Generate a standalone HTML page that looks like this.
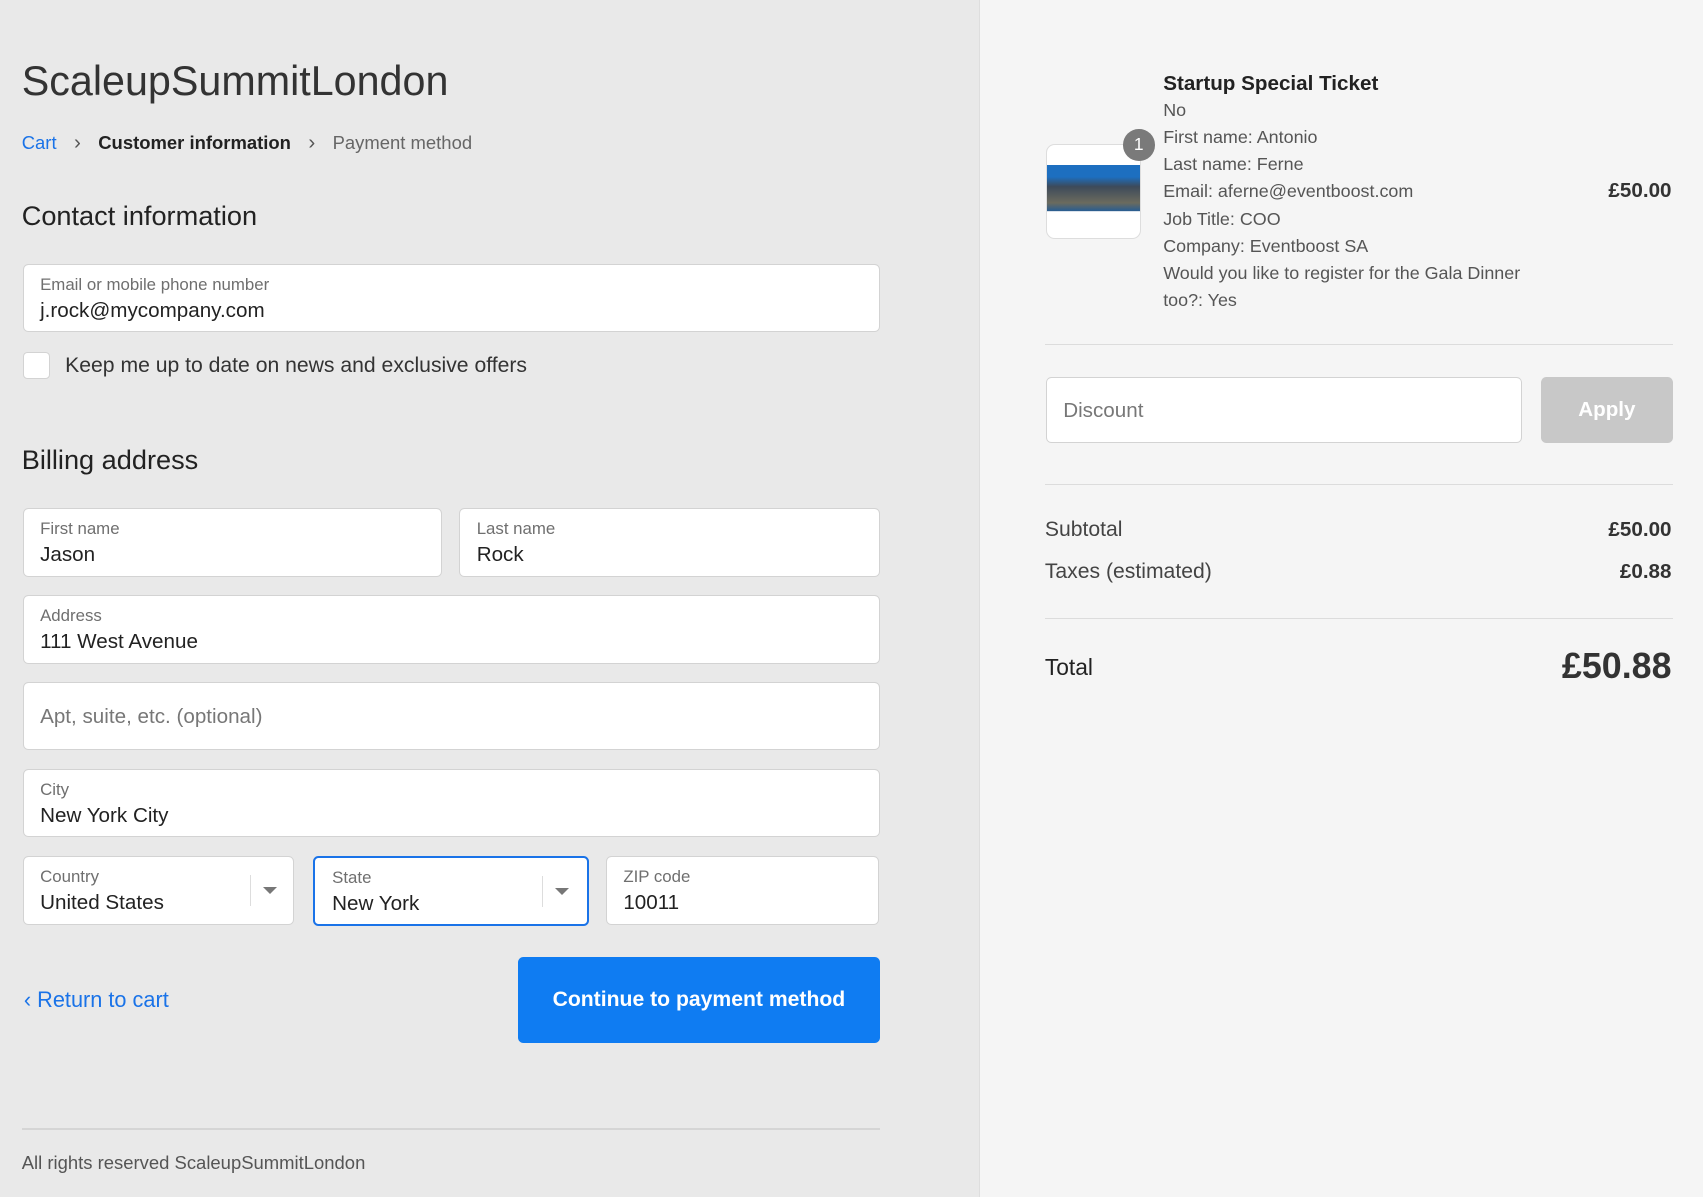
<!DOCTYPE html>
<html><head><meta charset="utf-8"><style>
*{box-sizing:border-box;margin:0;padding:0}
html,body{width:1703px;height:1197px;overflow:hidden;background:#f5f5f5}
#w{zoom:1.08610;width:1568px;height:1102px;position:relative;font-family:"Liberation Sans",Arial,sans-serif;color:#333}
.a{position:absolute;white-space:nowrap}
#left{position:absolute;left:0;top:0;width:902px;height:1102px;background:#e9e9e9;border-right:1px solid #dedede}
.in{position:absolute;background:#fff;border:1px solid #d3d3d3;border-radius:5px}
.lb{position:absolute;left:15px;top:9px;font-size:15.5px;color:#6f6f6f}
.vl{position:absolute;left:15px;top:31px;font-size:19px;color:#222}
.ph{position:absolute;left:15px;top:20px;font-size:19px;color:#777}
.sep{position:absolute;width:1px;height:28px;background:#ddd;top:17px}
.tri{position:absolute;top:28px;width:0;height:0;border-left:7px solid transparent;border-right:7px solid transparent;border-top:7px solid #777}
.hr{position:absolute;height:1px;background:#dcdcdc}
.r{position:absolute;font-size:16.5px;color:#555;left:1071px}
</style></head><body><div id="w">
<div id="left"></div>
<div class="a" style="left:20px;top:53px;font-size:38px;color:#333">ScaleupSummitLondon</div>
<div class="a" style="left:20px;top:121px;font-size:17px"><span style="color:#1a73e8">Cart</span><span style="color:#555;margin:0 16px;font-size:19px">&#8250;</span><span style="color:#222;font-weight:bold">Customer information</span><span style="color:#555;margin:0 16px;font-size:19px">&#8250;</span><span style="color:#666">Payment method</span></div>
<div class="a" style="left:20px;top:184px;font-size:25px;color:#222">Contact information</div>
<div class="in" style="left:21px;top:243px;width:789px;height:63px"><div class="lb">Email or mobile phone number</div><div class="vl">j.rock@mycompany.com</div></div>
<div class="in" style="left:21px;top:324px;width:25px;height:25px;border-radius:4px"></div>
<div class="a" style="left:60px;top:326px;font-size:19.5px;color:#333">Keep me up to date on news and exclusive offers</div>
<div class="a" style="left:20px;top:409px;font-size:25px;color:#222">Billing address</div>
<div class="in" style="left:21px;top:468px;width:386px;height:63px"><div class="lb">First name</div><div class="vl">Jason</div></div>
<div class="in" style="left:423px;top:468px;width:387px;height:63px"><div class="lb">Last name</div><div class="vl">Rock</div></div>
<div class="in" style="left:21px;top:548px;width:789px;height:63px"><div class="lb">Address</div><div class="vl">111 West Avenue</div></div>
<div class="in" style="left:21px;top:628px;width:789px;height:63px"><div class="ph">Apt, suite, etc. (optional)</div></div>
<div class="in" style="left:21px;top:708px;width:789px;height:63px"><div class="lb">City</div><div class="vl">New York City</div></div>
<div class="in" style="left:21px;top:788px;width:250px;height:64px"><div class="lb">Country</div><div class="vl">United States</div><div class="sep" style="left:208px"></div><div class="tri" style="left:220px"></div></div>
<div class="in" style="left:288px;top:788px;width:254px;height:65px;border:2px solid #1a73e8"><div class="lb" style="left:16px">State</div><div class="vl" style="left:16px">New York</div><div class="sep" style="left:209px"></div><div class="tri" style="left:221px"></div></div>
<div class="in" style="left:558px;top:788px;width:251px;height:64px"><div class="lb">ZIP code</div><div class="vl">10011</div></div>
<div class="a" style="left:22px;top:909px;font-size:20px;color:#1a73e8">&#8249; Return to cart</div>
<div class="a" style="left:477px;top:881px;width:333px;height:79px;background:#0f7cf2;border-radius:5px;color:#fff;font-size:19.5px;font-weight:bold;text-align:center;line-height:79px">Continue to payment method</div>
<div class="hr" style="left:20px;top:1039px;width:790px;background:#d5d5d5"></div>
<div class="a" style="left:20px;top:1061px;font-size:17px;color:#555">All rights reserved ScaleupSummitLondon</div>

<div class="a" style="left:963px;top:133px;width:88px;height:87px;background:#fff;border:1px solid #ddd;border-radius:8px;overflow:hidden"><div style="position:absolute;left:0;top:18px;width:88px;height:50px;background:linear-gradient(180deg,#1d6fc0 0,#1d6fc0 22%,#3d4a5a 40%,#6b6b5e 70%,#2a5d90 85%,#fff 86%)"></div></div>
<div class="a" style="left:1034px;top:119px;width:29px;height:29px;border-radius:50%;background:#7a7a7a;color:#fff;font-size:16px;text-align:center;line-height:29px">1</div>
<div class="a" style="left:1071px;top:66px;font-size:19px;font-weight:bold;color:#222">Startup Special Ticket</div>
<div class="r" style="top:92px">No</div>
<div class="r" style="top:117px">First name: Antonio</div>
<div class="r" style="top:142px">Last name: Ferne</div>
<div class="r" style="top:167px">Email: aferne@eventboost.com</div>
<div class="r" style="top:192px">Job Title: COO</div>
<div class="r" style="top:217px">Company: Eventboost SA</div>
<div class="r" style="top:242px">Would you like to register for the Gala Dinner</div>
<div class="r" style="top:267px">too?: Yes</div>
<div class="a" style="right:29px;top:165px;font-size:19px;font-weight:bold;color:#333">£50.00</div>
<div class="hr" style="left:962px;top:317px;width:578px"></div>
<div class="in" style="left:963px;top:347px;width:438px;height:61px"><div class="ph" style="top:19px">Discount</div></div>
<div class="a" style="left:1419px;top:347px;width:121px;height:61px;background:#c8c8c8;border-radius:5px;color:#fff;font-size:19px;font-weight:bold;text-align:center;line-height:61px">Apply</div>
<div class="hr" style="left:962px;top:446px;width:578px"></div>
<div class="a" style="left:962px;top:477px;font-size:19.5px;color:#444">Subtotal</div>
<div class="a" style="right:29px;top:477px;font-size:19px;font-weight:bold;color:#333">£50.00</div>
<div class="a" style="left:962px;top:516px;font-size:19.5px;color:#444">Taxes (estimated)</div>
<div class="a" style="right:29px;top:516px;font-size:19px;font-weight:bold;color:#333">£0.88</div>
<div class="hr" style="left:962px;top:569px;width:578px"></div>
<div class="a" style="left:962px;top:602px;font-size:21px;color:#222">Total</div>
<div class="a" style="right:29px;top:595px;font-size:33px;font-weight:bold;color:#333">£50.88</div>
</div></body></html>
